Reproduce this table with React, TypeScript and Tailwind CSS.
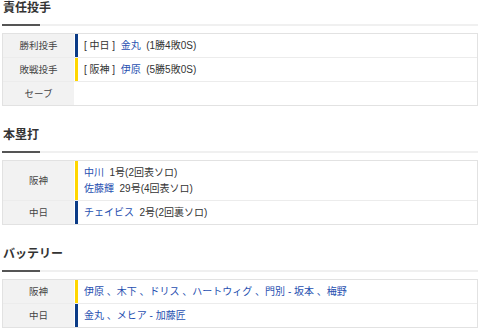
import React from 'react';

type Part = { text: string; link?: boolean };
type Row = { label: string; bar?: 'yellow' | 'blue'; lines: Part[][] };

const FONT = { fontFamily: '"Liberation Sans", "Noto Sans CJK JP", sans-serif' };

const pitchers: Row[] = [
  {
    label: '勝利投手',
    bar: 'blue',
    lines: [[{ text: '[ 中日 ]\u00a0\u00a0' }, { text: '金丸', link: true }, { text: '\u00a0\u00a0(1勝4敗0S)' }]],
  },
  {
    label: '敗戦投手',
    bar: 'yellow',
    lines: [[{ text: '[ 阪神 ]\u00a0\u00a0' }, { text: '伊原', link: true }, { text: '\u00a0\u00a0(5勝5敗0S)' }]],
  },
  { label: 'セーブ', lines: [[]] },
];

const homeruns: Row[] = [
  {
    label: '阪神',
    bar: 'yellow',
    lines: [
      [{ text: '中川', link: true }, { text: '\u00a0\u00a01号(2回表ソロ)' }],
      [{ text: '佐藤輝', link: true }, { text: '\u00a0\u00a029号(4回表ソロ)' }],
    ],
  },
  {
    label: '中日',
    bar: 'blue',
    lines: [[{ text: 'チェイビス', link: true }, { text: '\u00a0\u00a02号(2回裏ソロ)' }]],
  },
];

const battery: Row[] = [
  {
    label: '阪神',
    bar: 'yellow',
    lines: [[{ text: '伊原 、木下 、ドリス 、ハートウィグ 、門別 - 坂本 、梅野', link: true }]],
  },
  {
    label: '中日',
    bar: 'blue',
    lines: [[{ text: '金丸 、メヒア - 加藤匠', link: true }]],
  },
];

const Heading: React.FC<{ title: string; first?: boolean }> = ({ title, first }) => (
  <div className={first ? '' : 'mt-[21px]'}>
    <h2 className="text-[12px] leading-4 font-bold text-[#333] pl-[1px]">{title}</h2>
    <div className="flex items-start mt-[8px]">
      <div className="w-[38px] h-[2px] bg-[#555]" />
      <div className="flex-1 h-[2px] bg-[#f0f0f0]" />
    </div>
  </div>
);

const Table: React.FC<{ rows: Row[] }> = ({ rows }) => (
  <div className="mt-[7px] border border-[#e2e2e2]">
    {rows.map((r, i) => (
      <div key={i} className={`flex ${i > 0 ? 'border-t border-[#ececec]' : ''}`}>
        <div className="w-[71px] shrink-0 bg-[#f2f2f2] text-[#444] text-[9.5px] leading-4 flex items-center justify-center">
          {r.label}
        </div>
        <div className="w-[1px] shrink-0 bg-white" />
        <div
          className={`w-[3px] shrink-0 ${
            r.bar === 'yellow' ? 'bg-[#ffd600]' : r.bar === 'blue' ? 'bg-[#0b3b86]' : 'bg-white'
          }`}
        />
        <div className="flex-1 pl-[6px] pt-[4px] pb-[3px] text-[10px] leading-4 text-[#333]">
          {r.lines.map((line, j) => (
            <div key={j} className="h-4 whitespace-nowrap">
              {line.map((p, k) => (
                <span key={k} className={p.link ? 'text-[#1f4fb0]' : ''}>
                  {p.text}
                </span>
              ))}
            </div>
          ))}
        </div>
      </div>
    ))}
  </div>
);

export default function App() {
  return (
    <div className="w-[480px] h-[330px] bg-white px-[2px] overflow-hidden" style={FONT}>
      <Heading title="責任投手" first />
      <Table rows={pitchers} />
      <Heading title="本塁打" />
      <Table rows={homeruns} />
      <Heading title="バッテリー" />
      <Table rows={battery} />
    </div>
  );
}
